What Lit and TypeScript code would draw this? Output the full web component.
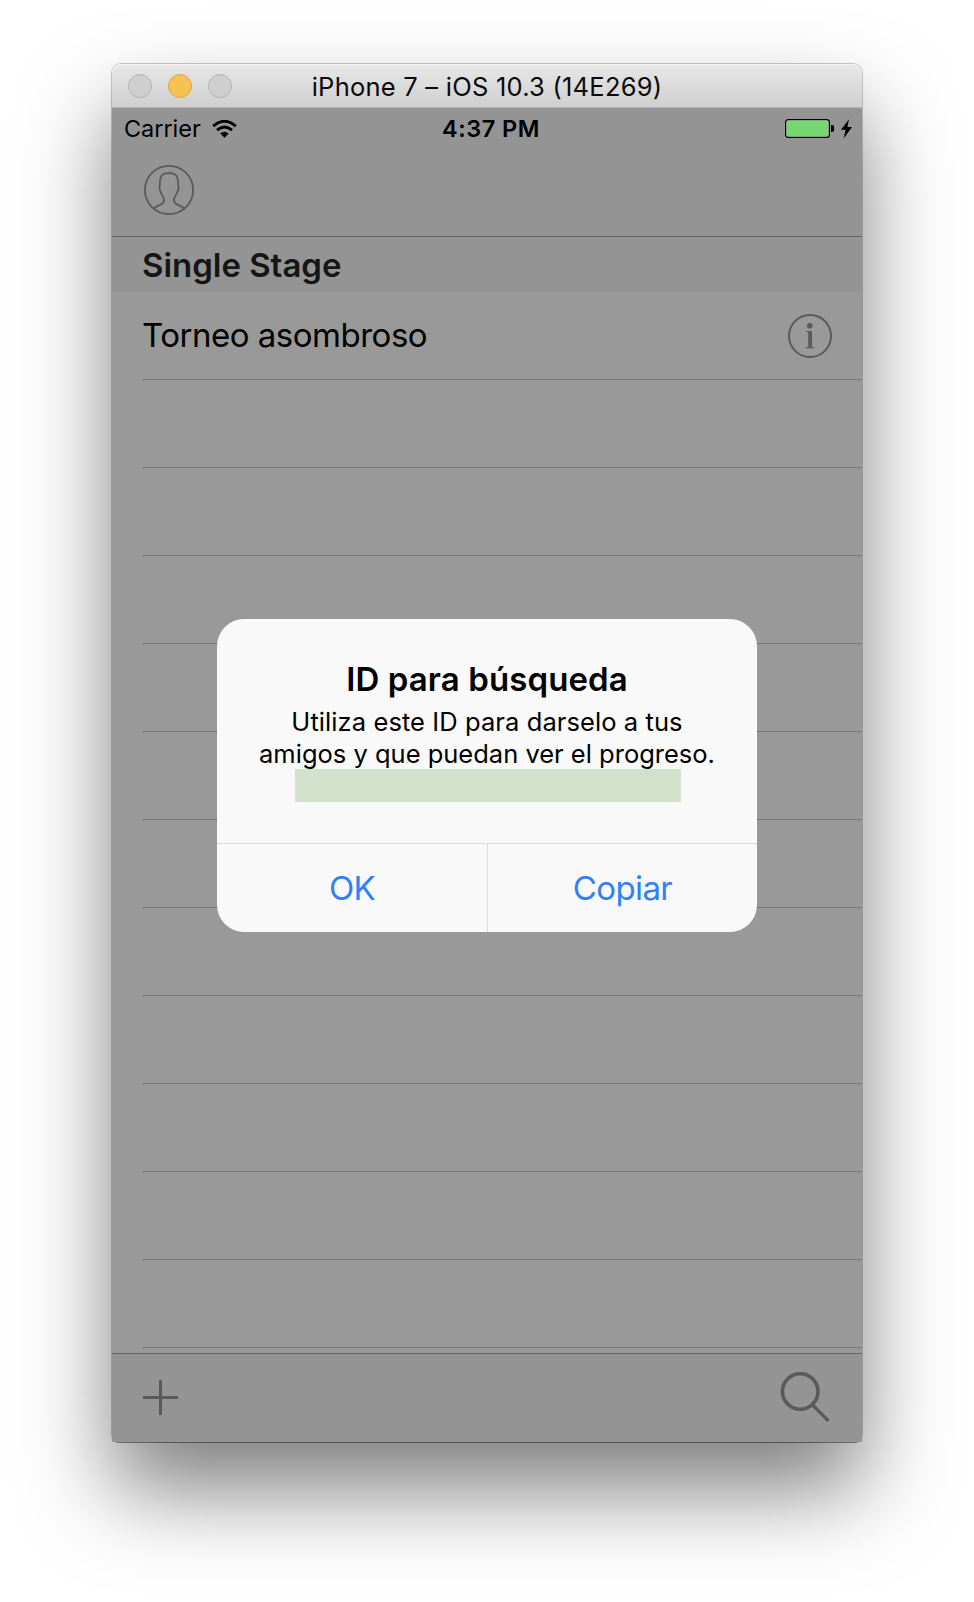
import { LitElement, html, css } from "lit";
import { customElement, property } from "lit/decorators.js";

@customElement("title-bar")
class TitleBar extends LitElement {
  @property() heading = "";
  static styles = css`
    :host {
      display: grid;
      grid-template-columns: 1fr auto 1fr;
      align-items: center;
      box-sizing: border-box;
      height: 44px;
      padding-left: 16px;
      background: linear-gradient(#e8e8e8, #cfcfcf);
      border-bottom: 1px solid #b3b3b3;
      box-shadow: inset 0 1px 0 #f5f5f5;
      border-radius: 9px 9px 0 0;
    }
    .lights { display: flex; gap: 16px; }
    .light {
      box-sizing: border-box;
      width: 24px;
      height: 24px;
      border-radius: 50%;
      background: #cfcfcf;
      border: 1px solid #b2b2b2;
    }
    .minimize { background: #f6c251; border-color: #dca541; }
    .heading {
      font-size: 25.5px;
      letter-spacing: 0.235px;
      line-height: 41px;
      padding-top: 2px;
      color: #0a0a0a;
      white-space: pre;
      margin-right: 16px;
    }
  `;
  render() {
    return html`
      <div class="lights">
        <span class="light"></span>
        <span class="light minimize"></span>
        <span class="light"></span>
      </div>
      <div class="heading">${this.heading}</div>
    `;
  }
}

@customElement("status-bar")
class StatusBar extends LitElement {
  static styles = css`
    :host {
      display: grid;
      grid-template-columns: 1fr auto 1fr;
      align-items: center;
      height: 41px;
      padding: 0 10px 0 12px;
      font-size: 23.5px;
      color: #000;
    }
    .carrier { display: flex; align-items: center; gap: 11px; letter-spacing: -0.05px; }
    .time { font-weight: 600; letter-spacing: 0.5px; margin-left: 6px; }
    .power { display: flex; align-items: center; justify-content: flex-end; gap: 6px; }
    svg { display: block; }
  `;
  render() {
    return html`
      <div class="carrier">
        <span>Carrier</span>
        <svg width="25" height="18" viewBox="0 0 25 18">
          <path d="M1.2 6.2Q12.5-3.6 23.8 6.2" fill="none" stroke="#000" stroke-width="3" />
          <path d="M5 10.2Q12.5 3.8 20 10.2" fill="none" stroke="#000" stroke-width="2.9" />
          <path d="M8.3 13.6Q12.5 10 16.7 13.6L12.5 17.8Z" />
        </svg>
      </div>
      <div class="time">4:37 PM</div>
      <div class="power">
        <svg width="50" height="19" viewBox="0 0 50 19">
          <rect x="0.6" y="0.6" width="43.8" height="17.8" rx="2.6" fill="#a9a0a9" stroke="#000" stroke-width="1.2" />
          <rect x="1.6" y="1.6" width="41.8" height="15.8" rx="1.8" fill="#76d672" />
          <path d="M46 6h1.2q1.9 0 1.9 2v3q0 2-1.9 2H46Z" />
        </svg>
        <svg width="11" height="20" viewBox="0 0 11 20">
          <path d="M8 0.3L0 10.8H4.6L2.6 19.4L11 7.9H6.4Z" />
        </svg>
      </div>
    `;
  }
}

@customElement("nav-bar")
class NavBar extends LitElement {
  static styles = css`
    :host {
      display: flex;
      align-items: center;
      box-sizing: border-box;
      height: 88px;
      padding: 0 32px 5px;
      border-bottom: 1px solid #646464;
    }
    svg { display: block; fill: none; stroke: #5a5a5a; stroke-width: 1.8; }
  `;
  render() {
    return html`
      <svg width="50" height="50" viewBox="0 0 50 50">
        <circle cx="25" cy="25" r="24.1" />
        <path d="M9.3 43.6C12.5 41 17.5 39.7 19.1 37.9C20.3 36.5 20 34 19.6 32.6C18 30 16.4 28 15.8 24.5C15 23 15.1 21.5 15.9 20.1C15.8 17 16 14 16.9 11.8C18.2 8.8 21 8.1 25 8.1C29 8.1 31.8 8.8 33.1 11.8C34 14 34.2 17 34.1 20.1C35 21.5 35.1 23 34.2 24.5C33.6 28 32 30 30.4 32.6C30 34 29.7 36.5 30.9 37.9C32.5 39.7 37.5 41 40.7 43.6" />
      </svg>
    `;
  }
}

@customElement("stage-list")
class StageList extends LitElement {
  @property({ attribute: false }) items: string[] = [];
  static rowCount = 12;
  static styles = css`
    :host { display: block; height: 1116px; background: #999; }
    .section {
      box-sizing: border-box;
      height: 55px;
      line-height: 53px;
      padding: 2px 0 0 30px;
      background: #949494;
      color: #161616;
      font-size: 33px;
      font-weight: 600;
      letter-spacing: -0.03px;
    }
    .row {
      display: flex;
      align-items: center;
      justify-content: space-between;
      box-sizing: border-box;
      height: 88px;
      margin-left: 30px;
      padding-right: 30px;
      border-bottom: 1px solid #777;
      font-size: 33px;
      letter-spacing: -0.49px;
      color: #000;
    }
    .label { line-height: 40px; padding-bottom: 2px; }
    svg { display: block; }
  `;
  render() {
    return html`
      <div class="section">Single Stage</div>
      ${Array.from({ length: StageList.rowCount }, (_, i) => html`
        <div class="row">
          ${this.items[i]
            ? html`
                <span class="label">${this.items[i]}</span>
                <svg width="44" height="44" viewBox="0 0 44 44">
                  <circle cx="22" cy="22" r="21" fill="none" stroke="#5a5a5a" stroke-width="2" />
                  <circle cx="21.8" cy="11.7" r="2.8" fill="#5a5a5a" />
                  <path d="M18 17H24V33.1H26.3V34.2H18V33.1H20.2V18.1H18Z" fill="#5a5a5a" />
                </svg>
              `
            : ""}
        </div>
      `)}
    `;
  }
}

@customElement("tool-bar")
class ToolBar extends LitElement {
  static styles = css`
    :host {
      display: flex;
      align-items: center;
      justify-content: space-between;
      box-sizing: border-box;
      height: 89px;
      padding: 0 32px 1px 31px;
      background: #949494;
      border-top: 1px solid #646464;
    }
    svg { display: block; fill: none; stroke: #5a5a5a; }
    .add { margin-bottom: 0; }
    .search { margin-bottom: 1px; }
  `;
  render() {
    return html`
      <svg class="add" width="35" height="35" viewBox="0 0 35 35">
        <path d="M17.5 0V35M0 17.5H35" stroke-width="3" />
      </svg>
      <svg class="search" width="50" height="50" viewBox="0 0 50 50">
        <circle cx="20.2" cy="19.5" r="17.8" stroke-width="3.6" />
        <path d="M32.8 33.2L47.4 47.9" stroke-width="3.4" stroke-linecap="round" />
      </svg>
    `;
  }
}

@customElement("alert-dialog")
class AlertDialog extends LitElement {
  static styles = css`
    :host {
      display: flex;
      flex-direction: column;
      width: 540px;
      height: 313px;
      border-radius: 27px;
      overflow: hidden;
      background: #f9f9f9;
      color: #000;
    }
    .body {
      display: flex;
      flex-direction: column;
      align-items: center;
      flex: 1;
      padding-top: 40px;
      text-align: center;
    }
    .title {
      font-size: 33px;
      font-weight: 600;
      line-height: 40px;
      letter-spacing: 0.1px;
      margin-bottom: 7px;
    }
    .message { font-size: 25.5px; line-height: 32px; margin-bottom: -1px; }
    .line { letter-spacing: 0.085px; }
    .wide { letter-spacing: 0; }
    .code { width: 386px; height: 33px; background: #d1e1ca; margin-left: 2px; }
    .actions {
      display: grid;
      grid-template-columns: 1fr 1fr;
      height: 88px;
      border-top: 1px solid #d9d9d9;
    }
    .action {
      font-size: 33px;
      line-height: 88px;
      letter-spacing: -0.62px;
      text-align: center;
      color: #2f7fff;
    }
    .action + .action { border-left: 1px solid #d9d9d9; }
  `;
  render() {
    return html`
      <div class="body">
        <div class="title">ID para búsqueda</div>
        <div class="message">
          <div class="line">Utiliza este ID para darselo a tus</div>
          <div class="line wide">amigos y que puedan ver el progreso.</div>
        </div>
        <div class="code"></div>
      </div>
      <div class="actions">
        <div class="action">OK</div>
        <div class="action">Copiar</div>
      </div>
    `;
  }
}

@customElement("app-root")
class AppRoot extends LitElement {
  static styles = css`
    :host {
      display: block;
      box-sizing: border-box;
      height: 1602px;
      padding: 64px 112px 0;
      overflow: hidden;
      background: #fff;
      font-family: Inter, "Liberation Sans", sans-serif;
    }
    .window {
      border-radius: 9px 9px 7px 7px;
      box-shadow: 0 0 0 1px rgba(0, 0, 0, 0.2), 0 1px 0 rgba(0, 0, 0, 0.3),
        0 48px 88px rgba(0, 0, 0, 0.5);
    }
    .screen { position: relative; background: #949494; }
    .alert { position: absolute; left: 105px; top: 511px; }
  `;
  render() {
    return html`
      <div class="window">
        <title-bar heading="iPhone 7 – iOS 10.3 (14E269)"></title-bar>
        <div class="screen">
          <status-bar></status-bar>
          <nav-bar></nav-bar>
          <stage-list .items=${["Torneo asombroso"]}></stage-list>
          <tool-bar></tool-bar>
          <alert-dialog class="alert"></alert-dialog>
        </div>
      </div>
    `;
  }
}
